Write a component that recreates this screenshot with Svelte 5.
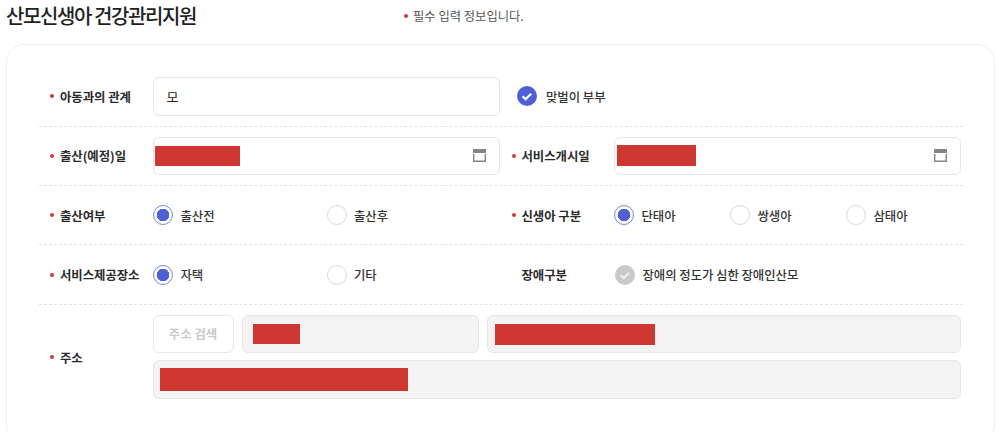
<script lang="ts">
    const birthStatus = [
        { label: "출산전", checked: true, width: 173.5 },
        { label: "출산후", checked: false },
    ];
    const babyType = [
        { label: "단태아", checked: true, width: 116 },
        { label: "쌍생아", checked: false, width: 116 },
        { label: "삼태아", checked: false },
    ];
    const place = [
        { label: "자택", checked: true, width: 173.5 },
        { label: "기타", checked: false },
    ];
</script>

{#snippet radios(items)}
    <div class="radios">
        {#each items as item}
            <span class="radio-item" style:width={item.width ? item.width + "px" : null}>
                <span class="radio" class:on={item.checked}></span>
                <span class="opt">{item.label}</span>
            </span>
        {/each}
    </div>
{/snippet}

{#snippet check(text, disabled)}
    <span class="check-item" class:disabled>
        <svg class="check" width="20" height="20" viewBox="0 0 20 20">
            <circle cx="10" cy="10" r="10" fill={disabled ? "#c9c9c9" : "#4f5fd6"} />
            <path d="M5.6 10.2l3 2.9 5.6-5.4" fill="none" stroke={disabled ? "#eeeeee" : "#fff"} stroke-width="2.2" />
        </svg>
        <span class="opt">{text}</span>
    </span>
{/snippet}

{#snippet calendar()}
    <svg class="cal" width="13" height="13" viewBox="0 0 13 13">
        <path d="M0 0h13v4H0z" fill="#858585" />
        <path d="M.7 5v7.3h11.6V5" fill="none" stroke="#858585" stroke-width="1.4" />
    </svg>
{/snippet}

<div class="page">
    <header>
        <h2>산모신생아 건강관리지원</h2>
        <p class="note"><i class="dot"></i>필수 입력 정보입니다.</p>
    </header>

    <section class="card">
        <div class="row">
            <div class="lbl req">아동과의 관계</div>
            <div class="field value">모</div>
            <div class="after">{@render check("맞벌이 부부", false)}</div>
        </div>

        <div class="row">
            <div class="lbl req">출산(예정)일</div>
            <div class="field date">
                <span class="mask" style:width="85px" style:height="20px"></span>
                {@render calendar()}
            </div>
            <div class="lbl req right">서비스개시일</div>
            <div class="field date second">
                <span class="mask" style:width="79.5px" style:height="21px"></span>
                {@render calendar()}
            </div>
        </div>

        <div class="row">
            <div class="lbl req">출산여부</div>
            {@render radios(birthStatus)}
            <div class="lbl req right">신생아 구분</div>
            {@render radios(babyType)}
        </div>

        <div class="row">
            <div class="lbl req">서비스제공장소</div>
            {@render radios(place)}
            <div class="lbl right">장애구분</div>
            <div class="after-cell">{@render check("장애의 정도가 심한 장애인산모", true)}</div>
        </div>

        <div class="row last">
            <div class="lbl req">주소</div>
            <div class="address">
                <div class="line">
                    <button type="button" class="search">주소 검색</button>
                    <div class="field gray zip"><span class="mask" style:width="47px" style:height="20px"></span></div>
                    <div class="field gray road"><span class="mask" style:width="160px" style:height="21px"></span></div>
                </div>
                <div class="field gray detail"><span class="mask" style:width="248px" style:height="23px"></span></div>
            </div>
        </div>
    </section>
</div>

<style>
    :global(body) {
        margin: 0;
        overflow: hidden;
        background: #fff;
    }

    .page {
        width: 1008px;
        height: 432px;
        overflow: hidden;
        padding: 0 13px 0 6px;
        box-sizing: border-box;
        font-family: "Noto Sans CJK KR", "Noto Sans", sans-serif;
        color: #222;
    }

    header {
        display: flex;
        align-items: center;
        height: 31px;
        margin-bottom: 12.5px;
    }

    h2 {
        margin: 0;
        width: 397px;
        font-size: 20px;
        font-weight: 500;
        letter-spacing: -1.4px;
        color: #1f1f1f;
    }

    .note {
        margin: 0;
        font-size: 12.3px;
        color: #555;
        display: flex;
        align-items: center;
    }

    .dot {
        width: 4px;
        height: 4px;
        border-radius: 50%;
        background: #cf3b38;
        margin: 0 5px 0 1px;
    }

    .card {
        border: 1.5px solid #efefef;
        border-radius: 18px;
        padding: 22.8px 31.5px 33px;
        box-sizing: border-box;
    }

    .row {
        display: grid;
        grid-template-columns: 114px 347px 114px 347px;
        align-items: center;
        padding: 10px 0;
        border-bottom: 1px dashed #e4e4e4;
    }

    .row.last {
        border-bottom: 0;
    }

    .lbl {
        position: relative;
        padding-left: 21.5px;
        padding-top: 1px;
        font-size: 12.4px;
        font-weight: 700;
        letter-spacing: -0.05px;
        color: #2a2a2a;
        white-space: nowrap;
    }

    .lbl.right {
        padding-left: 22px;
    }

    .lbl.req::before {
        content: "";
        position: absolute;
        left: 11.5px;
        top: 50%;
        width: 4px;
        height: 4px;
        margin-top: -2px;
        border-radius: 50%;
        background: #cf3b38;
    }

    .lbl.right.req::before {
        left: 12.5px;
    }

    .field {
        height: 38.4px;
        box-sizing: border-box;
        border: 1px solid #e6e6e6;
        border-radius: 6px;
        background: #fff;
        display: flex;
        align-items: center;
    }

    .value {
        padding-left: 13px;
        font-size: 13px;
    }

    .date {
        justify-content: space-between;
        padding: 0 12.5px 0 1px;
    }

    .date.second {
        padding-left: 2px;
    }

    .gray {
        background: #f3f3f3;
    }

    .mask {
        display: block;
        background: #cf3733;
    }

    .after {
        grid-column: 3 / 5;
        padding-left: 17.5px;
        display: flex;
        align-items: center;
    }

    .after-cell {
        display: flex;
        align-items: center;
        padding-left: 1px;
    }

    .radios {
        display: flex;
        align-items: center;
        height: 38.4px;
    }

    .radio-item,
    .check-item {
        display: inline-flex;
        align-items: center;
        flex: none;
    }

    .radio {
        width: 20px;
        height: 20px;
        box-sizing: border-box;
        border: 1px solid #d9d9d9;
        border-radius: 50%;
        margin: 0 7.5px 0 0.5px;
        background: #fff;
    }

    .radio.on {
        border: 1.5px solid #7484e6;
        background: radial-gradient(circle, #4f5fd6 0 6px, #fff 6.5px);
    }

    .opt {
        padding-top: 1px;
        font-size: 12.4px;
        font-weight: 500;
        letter-spacing: -0.05px;
        color: #333;
    }

    .check {
        flex: none;
        margin-right: 9px;
    }

    .disabled .check {
        margin-right: 8px;
    }

    .address {
        grid-column: 2 / 5;
        display: flex;
        flex-direction: column;
        gap: 6.6px;
    }

    .line {
        display: flex;
        gap: 8px;
    }

    .search {
        width: 81px;
        height: 38.4px;
        padding: 0;
        border: 1px solid #e8e8e8;
        border-radius: 6px;
        background: #fff;
        font: inherit;
        font-size: 12.4px;
        font-weight: 700;
        color: #c8c8c8;
    }

    .zip {
        width: 237px;
        padding-left: 10px;
    }

    .road {
        flex: 1;
        padding-left: 7px;
    }

    .detail {
        height: 39.4px;
        padding-left: 6px;
    }

    .cal {
        flex: none;
    }
</style>
